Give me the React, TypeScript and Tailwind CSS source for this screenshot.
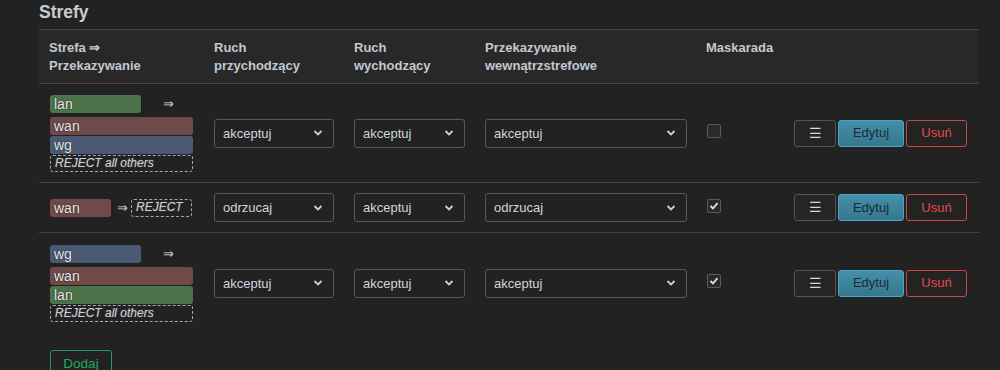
import React from "react";

const badgeColor: Record<string, string> = {
  lan: "bg-[#4b744b]",
  wan: "bg-[#6e4a4a]",
  wg: "bg-[#4b5a74]",
};

function Badge({ name, w }: { name: string; w?: string }) {
  return (
    <div
      className={`${badgeColor[name]} ${w ?? "w-full"} h-[18px] rounded-[3px] pl-[4px] text-[14px] leading-[18px] text-[#e6e6e6] [text-shadow:0_0_2px_rgba(0,0,0,0.7)]`}
    >
      {name}
    </div>
  );
}

function Reject({ text, w }: { text: string; w?: string }) {
  return (
    <div
      className={`${w ?? "w-full"} h-[17px] rounded-[3px] border border-dashed border-[#a8a8a8] pl-[4px] text-[12px] leading-[15px] italic text-[#c8ccd2] [text-shadow:0_0_1px_rgba(200,204,210,0.5)]`}
    >
      {text}
    </div>
  );
}

function Chevron() {
  return (
    <svg width="10" height="8" viewBox="0 0 10 8" className="absolute right-[10px] top-1/2 -translate-y-1/2">
      <path d="M1.5 2 L5 5.5 L8.5 2" stroke="#d0d0d0" strokeWidth="1.8" fill="none" />
    </svg>
  );
}

function Select({ value, w }: { value: string; w: string }) {
  return (
    <div
      className={`relative ${w} h-[29px] rounded-[3px] border border-[#585858] bg-[#222] pl-[8px] text-[13px] leading-[27px] text-[#d0d6de]`}
    >
      {value}
      <Chevron />
    </div>
  );
}

function Checkbox({ checked }: { checked: boolean }) {
  return (
    <div className="relative w-[14px] h-[14px] rounded-[2px] border border-[#5a5a5a] bg-[#2a2a2a]">
      {checked && (
        <svg width="12" height="12" viewBox="0 0 12 12" className="absolute left-[0px] top-[0px]">
          <path d="M2.5 6 L5 8.5 L9.5 3.2" stroke="#e0e0e0" strokeWidth="1.8" fill="none" />
        </svg>
      )}
    </div>
  );
}

function Buttons() {
  return (
    <div className="flex gap-[2px] shrink-0">
      <div className="w-[42px] h-[27px] rounded-[3px] border border-[#555] bg-[#252525] flex items-center justify-center text-[14px] text-[#d8d8d8]">
        ☰
      </div>
      <div className="w-[66px] h-[27px] rounded-[3px] border border-[#4ea3c2] bg-gradient-to-b from-[#4390aa] to-[#35778f] flex items-center justify-center text-[13px] text-[#1f2a30]">
        Edytuj
      </div>
      <div className="w-[61px] h-[27px] rounded-[3px] border border-[#c84848] bg-[#232323] flex items-center justify-center text-[13px] text-[#e24a4a]">
        Usuń
      </div>
    </div>
  );
}

function MultiZone({ src, dests }: { src: string; dests: string[] }) {
  return (
    <div className="flex flex-col gap-[1px] w-[143px]">
      <div className="flex items-center">
        <Badge name={src} w="w-[91px]" />
        <span className="ml-[22px] text-[13px] text-[#d0d0d0]">⇒</span>
      </div>
      <div className="flex flex-col gap-[1px] mt-[2px]">
        {dests.map((d) => (
          <Badge key={d} name={d} />
        ))}
        <Reject text="REJECT all others" />
      </div>
    </div>
  );
}

function Row({
  zone,
  inp,
  out,
  fwd,
  masq,
  h,
  border = true,
}: {
  zone: React.ReactNode;
  inp: string;
  out: string;
  fwd: string;
  masq: boolean;
  h: string;
  border?: boolean;
}) {
  return (
    <div className={`flex items-center pr-[12px] ${border ? "border-b border-[#444]" : ""} ${h}`}>
      <div className="w-[175px] shrink-0 pl-[11px]">{zone}</div>
      <div className="w-[140px] shrink-0">
        <Select value={inp} w="w-[120px]" />
      </div>
      <div className="w-[131px] shrink-0">
        <Select value={out} w="w-[111px]" />
      </div>
      <div className="w-[221px] shrink-0">
        <Select value={fwd} w="w-[202px]" />
      </div>
      <div className="flex-1 pl-[1px] -mt-[4px]">
        <Checkbox checked={masq} />
      </div>
      <Buttons />
    </div>
  );
}

export default function App() {
  return (
    <div className="w-[1000px] h-[370px] overflow-hidden bg-[#222222] font-['Liberation_Sans',Arial,sans-serif]">
      <div className="pl-[39px] pt-[2px] h-[29px] text-[17.5px] font-bold text-[#c8ccd2] leading-[20px]">Strefy</div>
      <div className="ml-[39px] w-[940px]">
        <div className="flex h-[55px] bg-[#282828] border-t border-b border-[#454545] pt-[9px] text-[13px] font-bold leading-[18px] text-[#c2c8d2]">
          <div className="w-[175px] shrink-0 pl-[10px]">
            Strefa ⇒<br />Przekazywanie
          </div>
          <div className="w-[140px] shrink-0">
            Ruch<br />przychodzący
          </div>
          <div className="w-[131px] shrink-0">
            Ruch<br />wychodzący
          </div>
          <div className="w-[221px] shrink-0">
            Przekazywanie<br />wewnątrzstrefowe
          </div>
          <div>Maskarada</div>
        </div>
        <Row
          h="h-[99px]"
          zone={<MultiZone src="lan" dests={["wan", "wg"]} />}
          inp="akceptuj"
          out="akceptuj"
          fwd="akceptuj"
          masq={false}
        />
        <Row
          h="h-[50px]"
          zone={
            <div className="flex items-center">
              <Badge name="wan" w="w-[61px]" />
              <span className="ml-[6px] text-[13px] text-[#d0d0d0]">⇒</span>
              <div className="ml-[3px]">
                <Reject text="REJECT" w="w-[61px] h-[18px]" />
              </div>
            </div>
          }
          inp="odrzucaj"
          out="akceptuj"
          fwd="odrzucaj"
          masq={true}
        />
        <Row
          h="h-[100px]"
          border={false}
          zone={<MultiZone src="wg" dests={["wan", "lan"]} />}
          inp="akceptuj"
          out="akceptuj"
          fwd="akceptuj"
          masq={true}
        />
        <div className="pl-[11px] pt-[17px]">
          <div className="w-[62px] h-[28px] rounded-[3px] border border-[#1f9e5e] bg-[#222] flex items-center justify-center text-[13.5px] text-[#22a862]">
            Dodaj
          </div>
        </div>
      </div>
    </div>
  );
}
